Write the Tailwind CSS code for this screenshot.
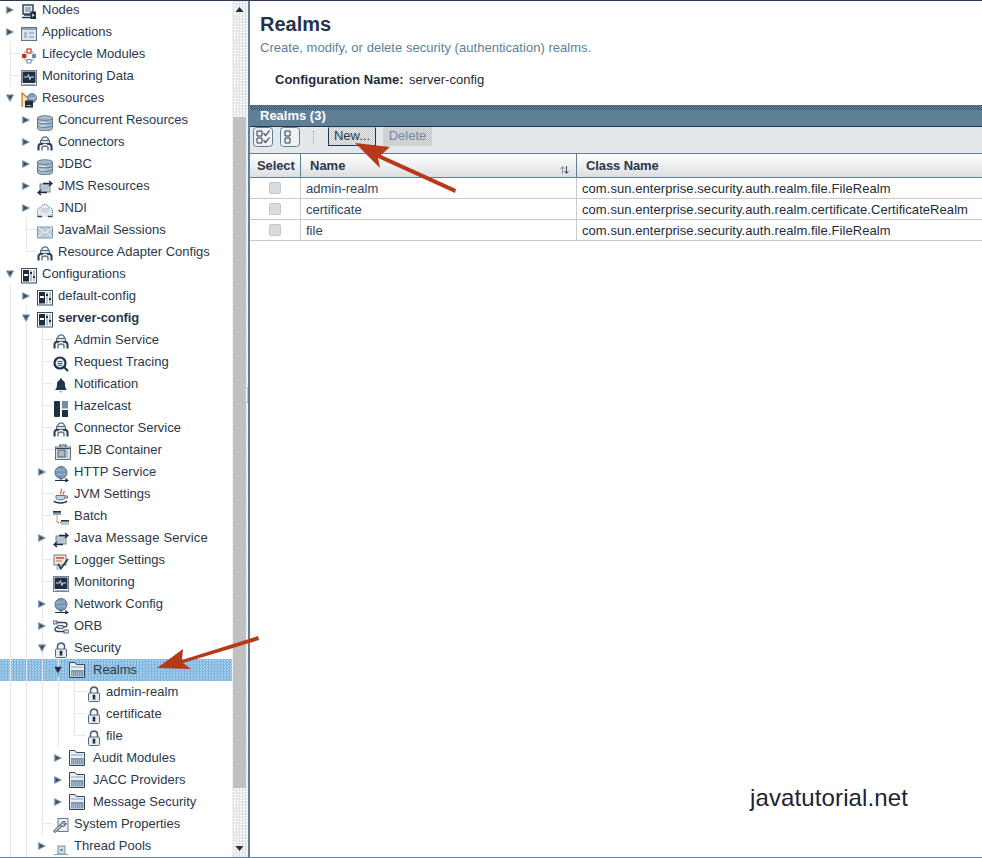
<!DOCTYPE html>
<html lang="en">
<head>
<meta charset="utf-8">
<title>Realms</title>
<script src="https://cdn.jsdelivr.net/npm/@tailwindcss/browser@4"></script>
</head>
<body class="relative w-[982px] h-[858px] overflow-hidden flex flex-col bg-white font-['Liberation_Sans',Arial,sans-serif] text-[13px] leading-none text-[#2b374b]">
<svg class="hidden" xmlns="http://www.w3.org/2000/svg">
  <symbol id="ar" viewBox="0 0 8 8"><path d="M0.5 0.5 L7.5 4 L0.5 7.5 Z" fill="#54718a" stroke="#7d95a8" stroke-width=".6"/><path d="M2 3 L4.5 4 L2 5 Z" fill="#24384e"/></symbol>
  <symbol id="ad" viewBox="0 0 8 8"><path d="M0.3 0.8 L7.7 0.8 L4 7.6 Z" fill="#54718a" stroke="#7d95a8" stroke-width=".6"/><path d="M3 2 L5 2 L4 4.8 Z" fill="#24384e"/></symbol>
  <symbol id="ads" viewBox="0 0 8 8"><path d="M0.3 0.8 L7.7 0.8 L4 7.6 Z" fill="#1f3044"/></symbol>
  <symbol id="nodes" viewBox="0 0 16 16"><rect x="2" y="1" width="10" height="9" fill="#e8edf1" stroke="#2a3648" stroke-width="1.4"/><rect x="4" y="3" width="6" height="5" fill="#9fb2c2"/><path d="M1 13.500 H11 M3 11 H10" stroke="#2a3648" stroke-width="1.600"/><rect x="9.500" y="7.500" width="5.500" height="7.500" fill="#1f2d42"/><path d="M11.300 9.500 L13.600 11.200 L11.300 13 Z" fill="#fff"/></symbol>
  <symbol id="apps" viewBox="0 0 16 16"><rect x=".5" y="1.500" width="15" height="13" fill="#dde5ec" stroke="#5f7386"/><rect x="1" y="2" width="14" height="2" fill="#8ea4b6"/><path d="M3 6 H6 V12 H3 Z M8 6 H13 V8 H8 Z M8 10 H13 V12 H8 Z" fill="#a9bac8"/></symbol>
  <symbol id="life" viewBox="0 0 16 16"><circle cx="8" cy="8" r="5.500" fill="none" stroke="#9fb1c0" stroke-width="1.200"/><rect x="6" y="1" width="4" height="4" fill="#fff" stroke="#bf3f25" stroke-width="1.200"/><rect x="1" y="6" width="4.500" height="4" fill="#b5391c"/><rect x="11" y="6" width="4" height="4" fill="#6f8ea8"/><rect x="6" y="11.500" width="4" height="3.500" fill="#fff" stroke="#6f8ea8"/></symbol>
  <symbol id="mon" viewBox="0 0 16 16"><rect x=".5" y=".5" width="15" height="15" fill="#fff" stroke="#6f8396"/><rect x="1.500" y="1.500" width="13" height="11.500" fill="#1e2f47"/><path d="M3 7 H6.500 L7.500 4.500 L8.800 9.500 L9.800 7 H13" stroke="#dfe7ee" fill="none"/><rect x="2" y="14" width="12" height="1" fill="#9fb1c0"/></symbol>
  <symbol id="res" viewBox="0 0 16 16"><path d="M1 15 V1 L7 6 V12" fill="#f4e2c4" stroke="#c5762c" stroke-width="1.200"/><circle cx="11" cy="6" r="4.500" fill="#7f9fbb" stroke="#5f7d96"/><path d="M8 7 C10 5 12 8 15 5" stroke="#d5e1ea" fill="none"/><rect x="4" y="8.500" width="8" height="7" fill="#202e42"/><path d="M5.500 13.500 H10" stroke="#9fb1c0"/></symbol>
  <symbol id="db" viewBox="0 0 16 16"><path d="M.5 3 C.5 0 15.500 0 15.500 3 V13.500 C15.500 16.400 .5 16.400 .5 13.500 Z" fill="#a7bbcb" stroke="#667f94"/><path d="M.5 3.500 C.5 5.900 15.500 5.900 15.500 3.500 M.5 7 C.5 9.400 15.500 9.400 15.500 7 M.5 10.500 C.5 12.900 15.500 12.900 15.500 10.500" fill="none" stroke="#5f7a90"/><path d="M2.500 7.500 H9 M2.500 11 H9" stroke="#dde6ed"/></symbol>
  <symbol id="conn" viewBox="0 0 16 16"><path d="M4.500 5 C4.500 -.5 11.500 -.5 11.500 5" fill="#eef2f5" stroke="#5a6c7d" stroke-width="1.300"/><rect x="3.500" y="4.500" width="9" height="3" fill="#dbe3ea" stroke="#5a6c7d"/><path d="M1.500 14.500 V10.500 C1.500 8 4 7.500 6 8 M14.500 14.500 V10.500 C14.500 8 12 7.500 10 8" fill="none" stroke="#34465a" stroke-width="2.200"/><path d="M5 14.500 V11.500 C5 9.500 11 9.500 11 11.500 V14.500" fill="none" stroke="#5f7386" stroke-width="1.400"/></symbol>
  <symbol id="jms" viewBox="0 0 16 16"><rect x="3" y="4" width="10" height="8" fill="#c2cfda" stroke="#71879a"/><path d="M4 7 H12 M4 9 H12" stroke="#8ba0b2" stroke-dasharray="1 1"/><path d="M6 3.500 H14 M12 1 L15 3.500 L12 6" fill="none" stroke="#1f2d42" stroke-width="1.300"/><path d="M10 12.500 H2 M4 10 L1 12.500 L4 15" fill="none" stroke="#1f2d42" stroke-width="1.300"/></symbol>
  <symbol id="jndi" viewBox="0 0 16 16"><path d="M.5 15 V8 C.5 6.500 3 5.500 4 5.500 C4 1.500 12 1.500 12 5.500 C13 5.500 15.500 6.500 15.500 8 V15" fill="#e6ecf0" stroke="#7c8fa0" stroke-dasharray="1.500 .7"/><rect x="4" y="6" width="8" height="5" fill="#cdd8e1"/><path d="M.5 14.500 H5 M11 14.500 H15.500" stroke="#34465a" stroke-width="1.400"/></symbol>
  <symbol id="mail" viewBox="0 0 16 16"><rect x=".5" y="3" width="15" height="11" fill="#bccede" stroke="#7f95a8"/><path d="M1 3.500 L8 9 L15 3.500 M1 13.500 L6 8 M15 13.500 L10 8" fill="none" stroke="#f2f6f9"/></symbol>
  <symbol id="cfg" viewBox="0 0 16 16"><rect x=".5" y=".5" width="15" height="14.500" fill="#fff" stroke="#3d4e61"/><rect x="2" y="2" width="6" height="11.500" fill="#1e2c40"/><rect x="3" y="6" width="4" height="2" fill="#fff"/><path d="M10 2 V13.500 M13 2 V13.500" stroke="#6f8396"/><path d="M9 5 H11 M12 9 H14" stroke="#1e2c40" stroke-width="2"/></symbol>
  <symbol id="search" viewBox="0 0 16 16"><circle cx="7" cy="7" r="5.500" fill="#e7edf2" stroke="#1f2f45" stroke-width="2.200"/><path d="M4.500 5.500 H9.500 M4.500 7.500 H9.500 M5 9.300 H9" stroke="#3e5771"/><path d="M11 11 L15 15" stroke="#1f2f45" stroke-width="2.200"/></symbol>
  <symbol id="bell" viewBox="0 0 16 16"><path d="M2 12 C4 10 4 8 4 6.500 C4 3 6 2 8 2 C10 2 12 3 12 6.500 C12 8 12 10 14 12 Z" fill="#24344a"/><rect x="7" y=".5" width="2" height="2" fill="#24344a"/><path d="M6 13 H10 L8 15 Z" fill="#9fb1c0"/></symbol>
  <symbol id="haz" viewBox="0 0 16 16"><rect x="1" y="0" width="6" height="16" rx="1" fill="#1f2f45"/><rect x="9" y="0" width="6" height="7.500" fill="#6f8da6"/><rect x="9" y="9" width="6" height="7" fill="#1f2f45"/></symbol>
  <symbol id="ejb" viewBox="0 0 16 16"><path d="M5 3 V1 H11 V3" fill="none" stroke="#34465a" stroke-width="1.200"/><rect x=".5" y="3" width="15" height="12.500" fill="#dbe3ea" stroke="#5f7386"/><rect x="3" y="6" width="7" height="7" fill="#a9bac8" stroke="#4a5d70"/><path d="M12 5 V14" stroke="#92a6b7"/><path d="M1 4.500 H15" stroke="#34465a"/></symbol>
  <symbol id="globe" viewBox="0 0 16 16"><circle cx="8" cy="6.500" r="6" fill="#7898b4" stroke="#536f87"/><path d="M3 5 C6 2 8 6 12 3 M4 9 C7 7 10 10 13 8" stroke="#aac0d2" fill="none"/><path d="M8 12.500 V14.500 M2 14.500 H14 M12 12.500 L15 14.500 L12 16" fill="none" stroke="#1f2d42" stroke-width="1.100"/></symbol>
  <symbol id="java" viewBox="0 0 16 16"><path d="M8 1 C10 3 6 4 8 6.500 M11 3 C12 4 9 5 10.500 6.500" fill="none" stroke="#c2552a" stroke-width="1.200"/><path d="M3 7.500 H12 V10 C12 12.500 3 12.500 3 10 Z" fill="#c4d2dd" stroke="#5f7587"/><path d="M12 8 H14.500 V10 H12" fill="none" stroke="#5f7587"/><path d="M1 13 C3 15.500 12 15.500 14 13" fill="none" stroke="#24344a" stroke-width="1.500"/></symbol>
  <symbol id="batch" viewBox="0 0 16 16"><rect x="0" y="1" width="8" height="4" fill="#8ea0b0"/><rect x="0" y="1" width="8" height="1.500" fill="#24344a"/><rect x="8" y="10" width="8" height="5" fill="#b9c6d1"/><rect x="8" y="10" width="8" height="1.500" fill="#24344a"/><path d="M4 5.500 V12.500 H8" fill="none" stroke="#c05a33" stroke-dasharray="1.500 1"/></symbol>
  <symbol id="log" viewBox="0 0 16 16"><rect x="1" y="1" width="12" height="10" fill="#f0e4d4" stroke="#6d7f90"/><path d="M3 4 H11" stroke="#b9572c" stroke-width="1.500"/><path d="M3 7 H9" stroke="#c47c47"/><path d="M5 10 L8 14.500 L15 5" fill="none" stroke="#2a3a4e" stroke-width="1.800"/><path d="M3 13 H6 M3 15 H7" stroke="#8ea0b0"/></symbol>
  <symbol id="orb" viewBox="0 0 16 16"><path d="M2 2.500 H11 C15 2.500 15 7 11 7 H5 C1 7 1 11.500 5 11.500 H14" fill="none" stroke="#34465a" stroke-width="1.300"/><rect x="0" y="1" width="4" height="3" fill="#dbe3ea" stroke="#34465a" stroke-width=".8"/><rect x="5" y="5.500" width="5" height="3" fill="#dbe3ea" stroke="#34465a" stroke-width=".8"/><rect x="11" y="10" width="5" height="3" fill="#dbe3ea" stroke="#34465a" stroke-width=".8"/></symbol>
  <symbol id="lock" viewBox="0 0 16 16"><path d="M4.500 7.500 V4.500 C4.500 0 11.500 0 11.500 4.500 V7.500" fill="none" stroke="#4f6378" stroke-width="1.600"/><rect x="2.500" y="7" width="11" height="8.500" rx="1" fill="#e6ecf1" stroke="#55697c"/><circle cx="8" cy="10" r="1.500" fill="#1f2d42"/><path d="M7.200 10 H8.800 L9.500 13.500 H6.500 Z" fill="#1f2d42"/></symbol>
  <symbol id="folder" viewBox="0 0 16 16"><path d="M.5 15.500 V.5 H6 L7.500 2.500 H15.500 V15.500 Z" fill="#e9eef2" stroke="#34465a"/><path d="M2 5 H14" stroke="#8fa3b4"/><rect x="2" y="8" width="12.500" height="6.500" fill="#7f9bb2"/><path d="M3 11 H13 M3 13 H13" stroke="#c2d0db" stroke-dasharray="1 1"/></symbol>
  <symbol id="wrench" viewBox="0 0 16 16"><rect x="5" y=".5" width="10" height="13" fill="#eef2f5" stroke="#667a8c"/><path d="M1 14 L9 6.500" stroke="#34465a" stroke-width="3"/><path d="M1.500 13.500 L9 6.500" stroke="#dfe6ec" stroke-width="1.200"/><path d="M8 8 C7 4.500 10 3 12 3.500 L10 5.500 L11 6.500 L13 5 C13 8 10.500 9 8 8 Z" fill="#dfe6ec" stroke="#34465a"/></symbol>
  <symbol id="thread" viewBox="0 0 16 16"><rect x="5" y="6" width="7" height="8" fill="#cfdae3" stroke="#7c92a5"/><rect x="7.500" y="9" width="2" height="2" fill="#5f7a90"/><path d="M1 14.500 H15" stroke="#8ea0b0"/></symbol>
  <symbol id="selall" viewBox="0 0 20 20"><rect x=".5" y=".5" width="19" height="19" rx="3" fill="#eef1f3" stroke="#5f7f97"/><path d="M4 4 H9 V9 H4 Z M4 11 H9 V16 H4 Z" fill="none" stroke="#2f3b4e"/><path d="M10.500 6 L12.500 8.500 L16.500 3.500 M10.500 13 L12.500 15.500 L16.500 10.500" fill="none" stroke="#2f3b4e" stroke-width="1.200"/></symbol>
  <symbol id="selnone" viewBox="0 0 20 20"><rect x=".5" y=".5" width="19" height="19" rx="3" fill="#eef1f3" stroke="#5f7f97"/><path d="M5 4 H10 V9 H5 Z M5 11 H10 V16 H5 Z" fill="none" stroke="#2f3b4e"/></symbol>
</svg>

<div class="h-px shrink-0 bg-[#2b3a55]"></div>
<div class="flex flex-1 min-h-0">
  <!-- tree pane -->
  <div class="relative w-[232px] shrink-0 overflow-hidden">
    <div class="-mt-[2px]">
      <div class="flex items-center h-[22px] pb-0.5 pl-1"><svg class="relative z-10 w-2 h-2 mx-0.5 translate-y-px"><use href="#ar"/></svg><svg class="w-4 h-4 ml-[5px] translate-y-[3px]"><use href="#nodes"/></svg><span class="ml-[5px]">Nodes</span></div>
      <div class="flex items-center h-[22px] pb-0.5 pl-1"><svg class="relative z-10 w-2 h-2 mx-0.5 translate-y-px"><use href="#ar"/></svg><svg class="w-4 h-4 ml-[5px] translate-y-[3px]"><use href="#apps"/></svg><span class="ml-[5px]">Applications</span></div>
      <div class="flex items-center h-[22px] pb-0.5 pl-1"><div class="ml-[6px] w-[11px] h-px bg-[#e6e8ea]"></div><svg class="w-4 h-4 translate-y-[3px]"><use href="#life"/></svg><span class="ml-[5px]">Lifecycle Modules</span></div>
      <div class="flex items-center h-[22px] pb-0.5 pl-1"><div class="ml-[6px] w-[11px] h-px bg-[#e6e8ea]"></div><svg class="w-4 h-4 translate-y-[3px]"><use href="#mon"/></svg><span class="ml-[5px]">Monitoring Data</span></div>
      <div class="flex items-center h-[22px] pb-0.5 pl-1"><svg class="relative z-10 w-2 h-2 mx-0.5 translate-y-px"><use href="#ad"/></svg><svg class="w-4 h-4 ml-[5px] translate-y-[3px]"><use href="#res"/></svg><span class="ml-[5px]">Resources</span></div>
      <div class="flex items-center h-[22px] pb-0.5 pl-5"><svg class="relative z-10 w-2 h-2 mx-0.5 translate-y-px"><use href="#ar"/></svg><svg class="w-4 h-4 ml-[5px] translate-y-1"><use href="#db"/></svg><span class="ml-[5px]">Concurrent Resources</span></div>
      <div class="flex items-center h-[22px] pb-0.5 pl-5"><svg class="relative z-10 w-2 h-2 mx-0.5 translate-y-px"><use href="#ar"/></svg><svg class="w-4 h-4 ml-[5px] translate-y-[3px]"><use href="#conn"/></svg><span class="ml-[5px]">Connectors</span></div>
      <div class="flex items-center h-[22px] pb-0.5 pl-5"><svg class="relative z-10 w-2 h-2 mx-0.5 translate-y-px"><use href="#ar"/></svg><svg class="w-4 h-4 ml-[5px] translate-y-1"><use href="#db"/></svg><span class="ml-[5px]">JDBC</span></div>
      <div class="flex items-center h-[22px] pb-0.5 pl-5"><svg class="relative z-10 w-2 h-2 mx-0.5 translate-y-px"><use href="#ar"/></svg><svg class="w-4 h-4 ml-[5px] translate-y-[3px]"><use href="#jms"/></svg><span class="ml-[5px]">JMS Resources</span></div>
      <div class="flex items-center h-[22px] pb-0.5 pl-5"><svg class="relative z-10 w-2 h-2 mx-0.5 translate-y-px"><use href="#ar"/></svg><svg class="w-4 h-4 ml-[5px] translate-y-[3px]"><use href="#jndi"/></svg><span class="ml-[5px]">JNDI</span></div>
      <div class="flex items-center h-[22px] pb-0.5 pl-5"><div class="ml-[6px] w-[11px] h-px bg-[#e6e8ea]"></div><svg class="w-4 h-4 translate-y-[3px]"><use href="#mail"/></svg><span class="ml-[5px]">JavaMail Sessions</span></div>
      <div class="flex items-center h-[22px] pb-0.5 pl-5"><div class="ml-[6px] w-[11px] h-px bg-[#e6e8ea]"></div><svg class="w-4 h-4 translate-y-[3px]"><use href="#conn"/></svg><span class="ml-[5px]">Resource Adapter Configs</span></div>
      <div class="flex items-center h-[22px] pb-0.5 pl-1"><svg class="relative z-10 w-2 h-2 mx-0.5 translate-y-px"><use href="#ad"/></svg><svg class="w-4 h-4 ml-[5px] translate-y-[3px]"><use href="#cfg"/></svg><span class="ml-[5px]">Configurations</span></div>
      <div class="flex items-center h-[22px] pb-0.5 pl-5"><svg class="relative z-10 w-2 h-2 mx-0.5 translate-y-px"><use href="#ar"/></svg><svg class="w-4 h-4 ml-[5px] translate-y-[3px]"><use href="#cfg"/></svg><span class="ml-[5px]">default-config</span></div>
      <div class="flex items-center h-[22px] pb-0.5 pl-5"><svg class="relative z-10 w-2 h-2 mx-0.5 translate-y-px"><use href="#ad"/></svg><svg class="w-4 h-4 ml-[5px] translate-y-[3px]"><use href="#cfg"/></svg><span class="ml-[5px] font-bold tracking-[-0.1px]">server-config</span></div>
      <div class="flex items-center h-[22px] pb-0.5 pl-9"><div class="ml-[6px] w-[11px] h-px bg-[#e6e8ea]"></div><svg class="w-4 h-4 translate-y-[3px]"><use href="#conn"/></svg><span class="ml-[5px] tracking-[0.1px]">Admin Service</span></div>
      <div class="flex items-center h-[22px] pb-0.5 pl-9"><div class="ml-[6px] w-[11px] h-px bg-[#e6e8ea]"></div><svg class="w-4 h-4 translate-y-[3px]"><use href="#search"/></svg><span class="ml-[5px]">Request Tracing</span></div>
      <div class="flex items-center h-[22px] pb-0.5 pl-9"><div class="ml-[6px] w-[11px] h-px bg-[#e6e8ea]"></div><svg class="w-4 h-4 translate-y-[3px]"><use href="#bell"/></svg><span class="ml-[5px]">Notification</span></div>
      <div class="flex items-center h-[22px] pb-0.5 pl-9"><div class="ml-[6px] w-[11px] h-px bg-[#e6e8ea]"></div><svg class="w-4 h-4 translate-y-1"><use href="#haz"/></svg><span class="ml-[5px]">Hazelcast</span></div>
      <div class="flex items-center h-[22px] pb-0.5 pl-9"><div class="ml-[6px] w-[11px] h-px bg-[#e6e8ea]"></div><svg class="w-4 h-4 translate-y-[3px]"><use href="#conn"/></svg><span class="ml-[5px]">Connector Service</span></div>
      <div class="flex items-center h-[22px] pb-0.5 pl-9"><div class="ml-[6px] w-[13px] h-px bg-[#e6e8ea]"></div><svg class="w-4 h-4 translate-y-[3px]"><use href="#ejb"/></svg><span class="ml-[7px]">EJB Container</span></div>
      <div class="flex items-center h-[22px] pb-0.5 pl-9"><svg class="relative z-10 w-2 h-2 mx-0.5 translate-y-px"><use href="#ar"/></svg><svg class="w-4 h-4 ml-[5px] translate-y-[3px]"><use href="#globe"/></svg><span class="ml-[5px] tracking-[0.15px]">HTTP Service</span></div>
      <div class="flex items-center h-[22px] pb-0.5 pl-9"><div class="ml-[6px] w-[11px] h-px bg-[#e6e8ea]"></div><svg class="w-4 h-4 translate-y-[3px]"><use href="#java"/></svg><span class="ml-[5px]">JVM Settings</span></div>
      <div class="flex items-center h-[22px] pb-0.5 pl-9"><div class="ml-[6px] w-[11px] h-px bg-[#e6e8ea]"></div><svg class="w-4 h-4 translate-y-[3px]"><use href="#batch"/></svg><span class="ml-[5px]">Batch</span></div>
      <div class="flex items-center h-[22px] pb-0.5 pl-9"><svg class="relative z-10 w-2 h-2 mx-0.5 translate-y-px"><use href="#ar"/></svg><svg class="w-4 h-4 ml-[5px] translate-y-[3px]"><use href="#jms"/></svg><span class="ml-[5px] tracking-[0.15px]">Java Message Service</span></div>
      <div class="flex items-center h-[22px] pb-0.5 pl-9"><div class="ml-[6px] w-[11px] h-px bg-[#e6e8ea]"></div><svg class="w-4 h-4 translate-y-[3px]"><use href="#log"/></svg><span class="ml-[5px]">Logger Settings</span></div>
      <div class="flex items-center h-[22px] pb-0.5 pl-9"><div class="ml-[6px] w-[11px] h-px bg-[#e6e8ea]"></div><svg class="w-4 h-4 translate-y-[3px]"><use href="#mon"/></svg><span class="ml-[5px]">Monitoring</span></div>
      <div class="flex items-center h-[22px] pb-0.5 pl-9"><svg class="relative z-10 w-2 h-2 mx-0.5 translate-y-px"><use href="#ar"/></svg><svg class="w-4 h-4 ml-[5px] translate-y-[3px]"><use href="#globe"/></svg><span class="ml-[5px]">Network Config</span></div>
      <div class="flex items-center h-[22px] pb-0.5 pl-9"><svg class="relative z-10 w-2 h-2 mx-0.5 translate-y-px"><use href="#ar"/></svg><svg class="w-4 h-4 ml-[5px] translate-y-[3px]"><use href="#orb"/></svg><span class="ml-[5px]">ORB</span></div>
      <div class="flex items-center h-[22px] pb-0.5 pl-9"><svg class="relative z-10 w-2 h-2 mx-0.5 translate-y-px"><use href="#ad"/></svg><svg class="w-4 h-4 ml-[5px] translate-y-[3px]"><use href="#lock"/></svg><span class="ml-[5px]">Security</span></div>
      <div class="flex items-center h-[22px] pb-0.5 pl-[52px] bg-[#90c1e4] bg-[repeating-conic-gradient(#7fb4dc_0_25%,#a6cfeb_0_50%)] bg-[length:3px_3px]"><svg class="relative z-10 w-2 h-2 mx-0.5 translate-y-px"><use href="#ads"/></svg><svg class="w-4 h-4 ml-[5px] translate-y-px"><use href="#folder"/></svg><span class="ml-2">Realms</span></div>
      <div class="flex items-center h-[22px] pb-0.5 pl-[68px]"><div class="ml-[6px] w-[12px] h-px bg-[#e6e8ea]"></div><svg class="w-4 h-4 translate-y-[3px]"><use href="#lock"/></svg><span class="ml-1">admin-realm</span></div>
      <div class="flex items-center h-[22px] pb-0.5 pl-[68px]"><div class="ml-[6px] w-[12px] h-px bg-[#e6e8ea]"></div><svg class="w-4 h-4 translate-y-[3px]"><use href="#lock"/></svg><span class="ml-1">certificate</span></div>
      <div class="flex items-center h-[22px] pb-0.5 pl-[68px]"><div class="ml-[6px] w-[12px] h-px bg-[#e6e8ea]"></div><svg class="w-4 h-4 translate-y-[3px]"><use href="#lock"/></svg><span class="ml-1">file</span></div>
      <div class="flex items-center h-[22px] pb-0.5 pl-[52px]"><svg class="relative z-10 w-2 h-2 mx-0.5 translate-y-px"><use href="#ar"/></svg><svg class="w-4 h-4 ml-[5px] translate-y-px"><use href="#folder"/></svg><span class="ml-2">Audit Modules</span></div>
      <div class="flex items-center h-[22px] pb-0.5 pl-[52px]"><svg class="relative z-10 w-2 h-2 mx-0.5 translate-y-px"><use href="#ar"/></svg><svg class="w-4 h-4 ml-[5px] translate-y-px"><use href="#folder"/></svg><span class="ml-2">JACC Providers</span></div>
      <div class="flex items-center h-[22px] pb-0.5 pl-[52px]"><svg class="relative z-10 w-2 h-2 mx-0.5 translate-y-px"><use href="#ar"/></svg><svg class="w-4 h-4 ml-[5px] translate-y-px"><use href="#folder"/></svg><span class="ml-2">Message Security</span></div>
      <div class="flex items-center h-[22px] pb-0.5 pl-9"><div class="ml-[6px] w-[11px] h-px bg-[#e6e8ea]"></div><svg class="w-4 h-4 translate-y-[3px]"><use href="#wrench"/></svg><span class="ml-[5px]">System Properties</span></div>
      <div class="flex items-center h-[22px] pb-0.5 pl-9"><svg class="relative z-10 w-2 h-2 mx-0.5 translate-y-px"><use href="#ar"/></svg><svg class="w-4 h-4 ml-[5px] translate-y-[3px]"><use href="#thread"/></svg><span class="ml-[5px]">Thread Pools</span></div>
    </div>
    <!-- tree guide lines -->
    <div class="absolute left-[10px] top-[41px] w-px h-[44px] bg-[#e6e8ea]"></div>
    <div class="absolute left-[10px] top-[284px] w-px h-[572px] bg-[#e6e8ea]"></div>
    <div class="absolute left-[26px] top-[217px] w-px h-[34px] bg-[#e6e8ea]"></div>
    <div class="absolute left-[26px] top-[306px] w-px h-[550px] bg-[#e6e8ea]"></div>
    <div class="absolute left-[42px] top-[327px] w-px h-[507px] bg-[#e6e8ea]"></div>
    <div class="absolute left-[58px] top-[658px] w-px h-[8px] bg-[#e6e8ea]"></div>
    <div class="absolute left-[58px] top-[676px] w-px h-[70px] bg-[#e6e8ea]"></div>
    <div class="absolute left-[74px] top-[680px] w-px h-[55px] bg-[#e6e8ea]"></div>
  </div>
  <!-- scrollbar -->
  <div class="relative flex flex-col justify-between w-4 shrink-0 bg-[#ebedee] bg-[repeating-conic-gradient(#dfe1e3_0_25%,#fbfbfb_0_50%)] bg-[length:3px_3px]">
    <svg class="w-4 h-[18px]" viewBox="0 0 16 18"><path d="M3.500 11 L7.500 6 L11.500 11 Z" fill="#1f2f45"/></svg>
    <svg class="w-4 h-[18px]" viewBox="0 0 16 18"><path d="M3.500 7 L7.500 12 L11.500 7 Z" fill="#1f2f45"/></svg>
    <div class="absolute left-px top-[116px] w-[13px] h-[671px] bg-[#c0c1c3]"></div>
    <div class="absolute right-0 top-[386px] w-[3px] h-[16px] bg-white border border-[#c0c4c7]"></div>
  </div>
  <div class="w-0.5 shrink-0 bg-[#5f7f97]"></div>
  <!-- main pane -->
  <div class="relative flex-1 flex flex-col min-w-0">
    <h1 class="mt-[11px] h-6 pl-[10px] text-[20px] leading-6 font-bold text-[#28324c]">Realms</h1>
    <p class="mt-[2px] h-5 pl-[10px] leading-5 tracking-[0.035px] text-[#5d7f98]">Create, modify, or delete security (authentication) realms.</p>
    <div class="mt-[11px] h-5 pl-[25px] flex items-center text-[#1f2a3c]"><span class="font-bold w-[134px]">Configuration Name:</span><span>server-config</span></div>
    <div class="mt-4 h-[21px] bg-[#5f7f97] font-bold text-white">
      <div class="h-[5px] bg-[#56708a] bg-[repeating-conic-gradient(#36506a_0_25%,#6f8ba3_0_50%)] bg-[length:2px_2px]"></div>
      <div class="h-4 pb-1.5 pl-[10px] flex items-center">Realms (3)</div>
    </div>
    <div class="h-[27px] border-t border-[#24364f] bg-[#e5e8ea] flex items-start pl-[3px]">
      <svg class="w-5 h-5"><use href="#selall"/></svg>
      <svg class="w-5 h-5 ml-[7px]"><use href="#selnone"/></svg>
      <div class="ml-[13px] mt-1 h-[12px] border-l border-dotted border-[#8a98a5]"></div>
      <button class="ml-[14px] w-[48px] h-[19px] pb-0.5 border border-[#24364f] border-t-[#c9ced2] bg-[#d6d8d9] bg-[repeating-conic-gradient(#c9cbcc_0_25%,#e6e7e8_0_50%)] bg-[length:2px_2px] text-[#2b374b] text-[13px]">New...</button>
      <button class="ml-[7px] w-[49px] h-[19px] pb-0.5 bg-[#cfd1d2] bg-[repeating-conic-gradient(#c3c5c7_0_25%,#dcdddf_0_50%)] bg-[length:2px_2px] text-[#6a8aa6] text-[13px]">Delete</button>
    </div>
    <div class="grid grid-cols-[51px_276px_1fr] h-[25px] border-y border-[#5f7f97] bg-[linear-gradient(#ffffff,#f0f1f2_45%,#dcdee0)] font-bold text-[#2b374b] items-stretch">
      <div class="border-r border-[#5f7f97] flex items-center pl-[7px] tracking-[-0.1px]">Select</div>
      <div class="relative border-r border-[#5f7f97] flex items-center pl-[9px]">Name
        <svg class="absolute right-[7px] top-3 w-[9px] h-2" viewBox="0 0 9 8"><path d="M2.500 8 V1 M.5 3 L2.500 .5 L4.500 3" fill="none" stroke="#7d95a8"/><path d="M6.500 0 V7 M4.500 5 L6.500 7.500 L8.500 5" fill="none" stroke="#3a5068"/></svg>
      </div>
      <div class="flex items-center pl-[9px] tracking-[-0.1px]">Class Name</div>
    </div>
    <div class="grid grid-cols-[51px_276px_1fr] h-[21px] border-b border-[#c8cacc] text-[#2f4560]">
      <div class="border-r border-[#c8cacc] flex items-center justify-center"><div class="w-[12px] h-[12px] -mt-px -ml-[1px] rounded-[2px] border border-[#c3c7ca] bg-[#d9dbdc]"></div></div>
      <div class="border-r border-[#c8cacc] flex items-center pl-[5px]">admin-realm</div>
      <div class="flex items-center pl-[5px] tracking-[0.06px] text-[#222c3a]">com.sun.enterprise.security.auth.realm.file.FileRealm</div>
    </div>
    <div class="grid grid-cols-[51px_276px_1fr] h-[21px] border-b border-[#c8cacc] text-[#2f4560]">
      <div class="border-r border-[#c8cacc] flex items-center justify-center"><div class="w-[12px] h-[12px] -mt-px -ml-[1px] rounded-[2px] border border-[#c3c7ca] bg-[#d9dbdc]"></div></div>
      <div class="border-r border-[#c8cacc] flex items-center pl-[5px]">certificate</div>
      <div class="flex items-center pl-[5px] tracking-[0.06px] text-[#222c3a]">com.sun.enterprise.security.auth.realm.certificate.CertificateRealm</div>
    </div>
    <div class="grid grid-cols-[51px_276px_1fr] h-[21px] border-b border-[#c8cacc] text-[#2f4560]">
      <div class="border-r border-[#c8cacc] flex items-center justify-center"><div class="w-[12px] h-[12px] -mt-px -ml-[1px] rounded-[2px] border border-[#c3c7ca] bg-[#d9dbdc]"></div></div>
      <div class="border-r border-[#c8cacc] flex items-center pl-[5px]">file</div>
      <div class="flex items-center pl-[5px] tracking-[0.06px] text-[#222c3a]">com.sun.enterprise.security.auth.realm.file.FileRealm</div>
    </div>
    <div class="absolute left-[500px] top-[783px] text-[24px] leading-7 tracking-[0.12px] text-[#1b2534]">javatutorial.net</div>
  </div>
</div>
<div class="h-px shrink-0 bg-[#5f7f97]"></div>
<!-- annotation arrows -->
<svg class="absolute inset-0 w-[982px] h-[858px] pointer-events-none" viewBox="0 0 982 858">
  <polygon points="355,143 390,147 381,155 456,189 455,193 378,158 380,168" fill="#b5391a"/>
  <polygon points="157,668 183,649 182,660 258,636 259,640 183,663 191,669" fill="#b5391a"/>
</svg>
</body>
</html>
